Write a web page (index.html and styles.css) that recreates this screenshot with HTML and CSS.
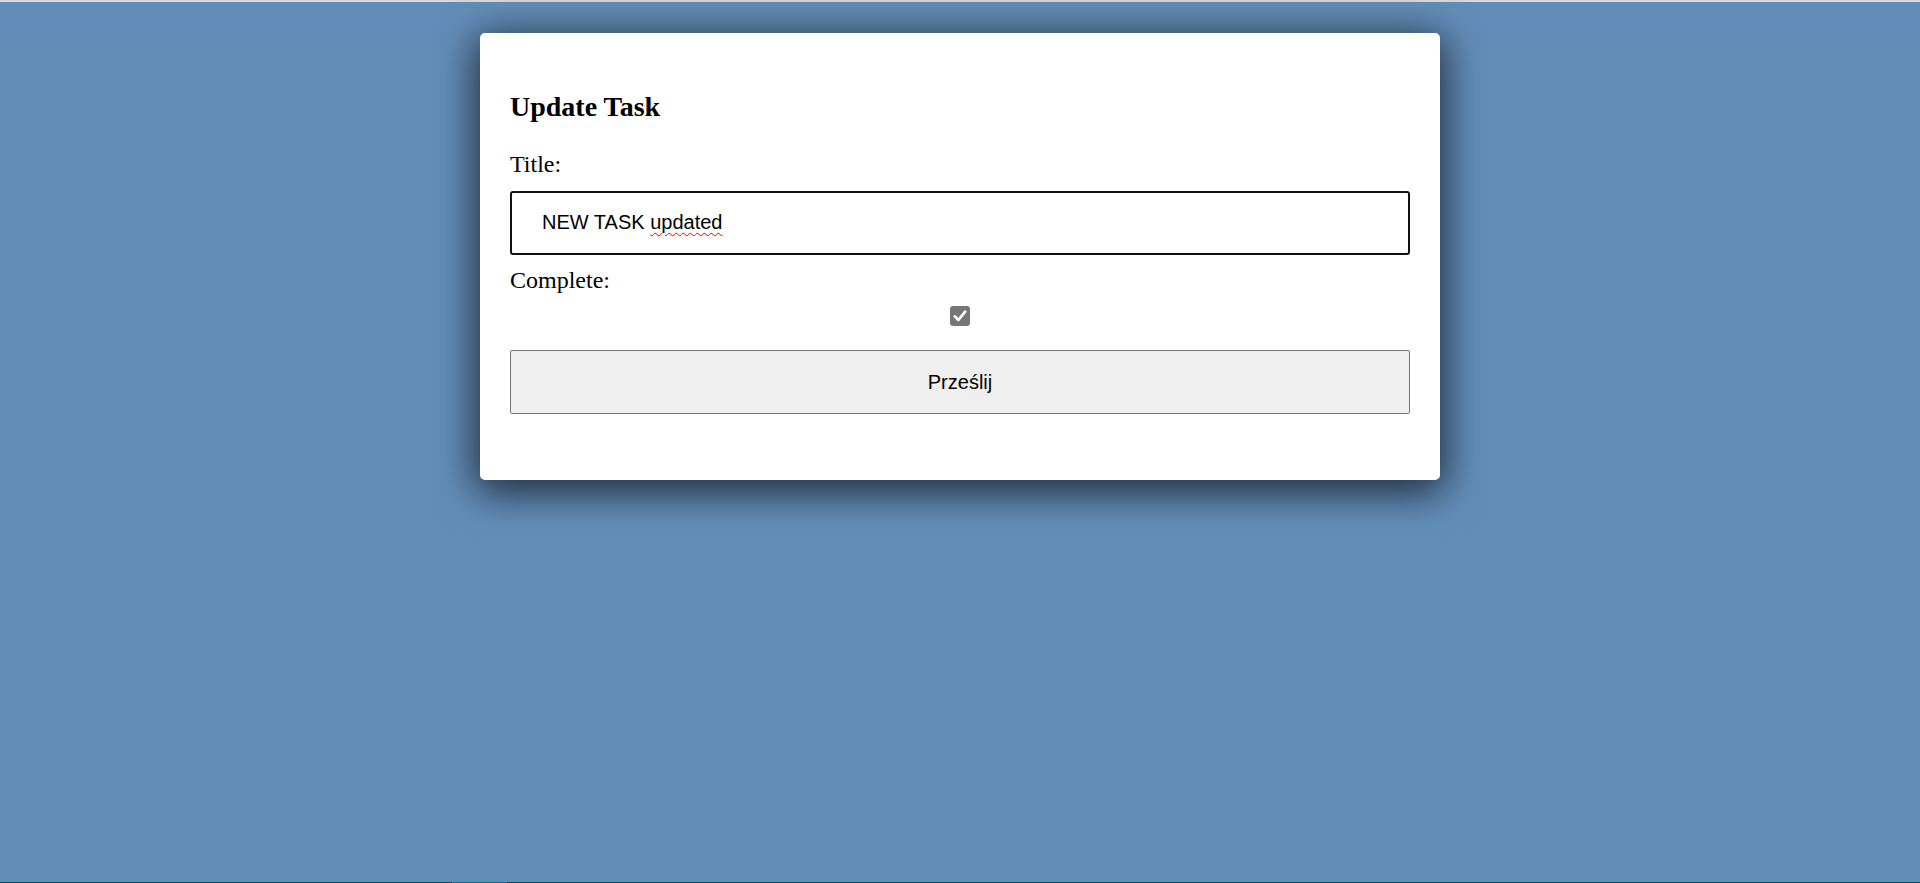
FILE: index.html
```html
<!DOCTYPE html>
<html lang="pl">
<head>
<meta charset="utf-8">
<title>Update Task</title>
<link rel="stylesheet" href="styles.css">
</head>
<body>
  <div class="top-strip"></div>
  <main class="stage">
    <form class="card">
      <h2 class="card-title">Update Task</h2>
      <label class="field-label">Title:</label>
      <div class="text-input">NEW TASK <span class="misspelled">updated</span></div>
      <label class="field-label complete-label">Complete:</label>
      <div class="check-row">
        <span class="checkbox">
          <svg viewBox="0 0 20 20" width="16" height="16"><path d="M3.5 10.5 L8 15 L16.5 4.5" fill="none" stroke="#fff" stroke-width="3.4" stroke-linecap="round" stroke-linejoin="round"/></svg>
        </span>
      </div>
      <button type="button" class="submit-btn">Prześlij</button>
    </form>
  </main>
  <div class="bottom-line"><span class="bottom-seg"></span></div>
</body>
</html>
```

FILE: styles.css
```css
html, body {
  margin: 0;
  padding: 0;
  height: 100%;
}
body {
  display: flex;
  flex-direction: column;
  background: #638db9;
  font-family: "Liberation Serif", "Times New Roman", serif;
  overflow: hidden;
}
.top-strip {
  height: 2px;
  background: #d8d8d8;
  flex: none;
}
.stage {
  flex: 1;
  display: flex;
  justify-content: center;
  align-items: flex-start;
  padding-top: 31px;
}
.card {
  width: 960px;
  box-sizing: border-box;
  background: #fff;
  border-radius: 5px;
  padding: 59px 30px 66px 30px;
  box-shadow: 0 8px 40px 4px rgba(0, 0, 0, 0.7);
  display: flex;
  flex-direction: column;
}
.card-title {
  margin: 0 0 31px 0;
  font-size: 28px;
  font-weight: bold;
  color: #000;
  line-height: 29px;
}
.field-label {
  display: block;
  font-size: 24px;
  line-height: 24px;
  color: #000;
}
.text-input {
  margin-top: 15px;
  height: 64px;
  box-sizing: border-box;
  border: 2px solid #111;
  border-radius: 3px;
  padding: 0 30px 2px 30px;
  display: flex;
  align-items: center;
  font-family: "Liberation Sans", Arial, sans-serif;
  font-size: 20px;
  color: #000;
  white-space: pre;
}
.misspelled {
  text-decoration: underline wavy #e00;
  text-decoration-thickness: 1px;
  text-underline-offset: 3px;
}
.complete-label {
  margin-top: 13px;
}
.check-row {
  display: flex;
  justify-content: center;
  margin-top: 14px;
}
.checkbox {
  width: 20px;
  height: 20px;
  border-radius: 3px;
  background: #767676;
  display: flex;
  align-items: center;
  justify-content: center;
}
.submit-btn {
  margin-top: 24px;
  height: 64px;
  width: 100%;
  background: #efefef;
  border: 1px solid #767676;
  border-radius: 2px;
  font-family: "Liberation Sans", Arial, sans-serif;
  font-size: 20px;
  color: #000;
  padding: 0;
}
.bottom-line {
  height: 1px;
  flex: none;
  background: #0b4a5c;
  display: flex;
}
.bottom-seg {
  margin-left: 452px;
  width: 55px;
  background: #1a6f87;
}
```
